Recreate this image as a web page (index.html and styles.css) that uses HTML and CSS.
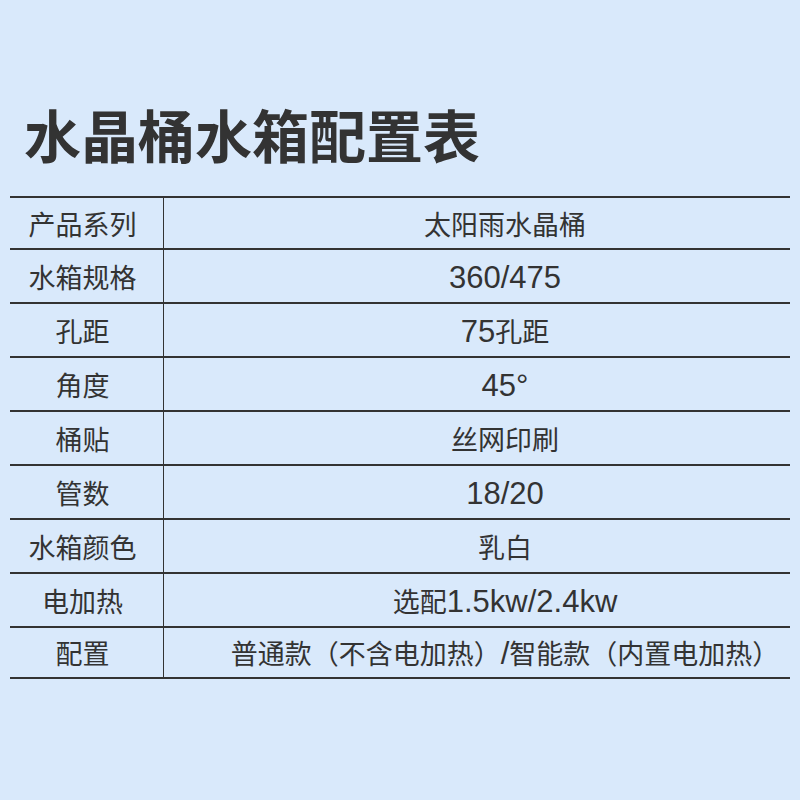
FILE: index.html
```html
<!DOCTYPE html>
<html lang="zh">
<head>
<meta charset="utf-8">
<link rel="stylesheet" href="styles.css">
</head>
<body>
<div class="page">
  <h1 class="title">水晶桶水箱配置表</h1>
  <div class="table">
    <div class="row first"><div class="label">产品系列</div><div class="value">太阳雨水晶桶</div></div>
    <div class="row"><div class="label">水箱规格</div><div class="value"><span class="latin">360/475</span></div></div>
    <div class="row"><div class="label">孔距</div><div class="value"><span class="latin">75</span>孔距</div></div>
    <div class="row"><div class="label">角度</div><div class="value"><span class="latin">45°</span></div></div>
    <div class="row"><div class="label">桶贴</div><div class="value">丝网印刷</div></div>
    <div class="row"><div class="label">管数</div><div class="value"><span class="latin">18/20</span></div></div>
    <div class="row"><div class="label">水箱颜色</div><div class="value">乳白</div></div>
    <div class="row"><div class="label">电加热</div><div class="value">选配<span class="latin">1.5kw/2.4kw</span></div></div>
    <div class="row last"><div class="label">配置</div><div class="value">普通款<span class="paren">（</span>不含电加热<span class="paren">）</span><span class="latin">/</span>智能款<span class="paren">（</span>内置电加热<span class="paren">）</span></div></div>
  </div>
</div>
</body>
</html>
```
FILE: styles.css
```css
html, body {
  margin: 0;
  padding: 0;
  background: #d9e9fb;
}
body {
  width: 800px;
  height: 800px;
  font-family: "Noto Sans CJK SC", "Noto Sans", sans-serif;
  color: #333333;
}
.page {
  padding-top: 105px;
}
.title {
  margin: 0 0 34px 24px;
  font-size: 57px;
  line-height: 57px;
  font-weight: 700;
  color: #333333;
}
.table {
  margin: 0 10px;
  border-top: 2px solid #333333;
}
.row {
  display: grid;
  grid-template-columns: 154px 1fr;
  height: 52px;
  border-bottom: 2px solid #333333;
  box-sizing: border-box;
}
.row + .row {
  height: 54px;
}
.row.last {
  height: 51px;
}
.label, .value {
  display: flex;
  align-items: center;
  justify-content: center;
  font-size: 27px;
  line-height: 1;
}
.label {
  border-right: 1px solid #333333;
  padding-right: 8px;
}
.value {
  padding-left: 56px;
  white-space: nowrap;
}
.latin {
  font-family: "Liberation Sans", Arial, sans-serif;
  font-size: 31px;
  line-height: 1;
  position: relative;
  top: 1px;
}
.paren {
  font-family: "Noto Sans CJK TC", "Noto Sans CJK SC", sans-serif;
}
```
